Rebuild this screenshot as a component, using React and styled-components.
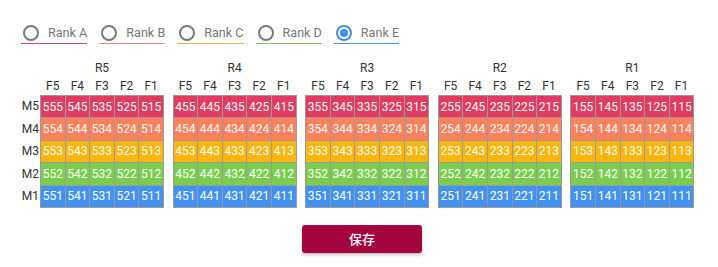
import React, { useState } from 'react'
import styled, { createGlobalStyle } from 'styled-components'

const GlobalStyle = createGlobalStyle`
  html, body {
    margin: 0;
    padding: 0;
    background: #fff;
  }
  * {
    box-sizing: border-box;
    font-family: Roboto, "Noto Sans CJK SC", sans-serif;
  }
`;

const RANKS = [
  { key: 'A', color: '#d6446b' },
  { key: 'B', color: '#f2846f' },
  { key: 'C', color: '#f3b331' },
  { key: 'D', color: '#7dc35e' },
  { key: 'E', color: '#4a8ee6' },
];

const ROW_COLORS = {
  5: '#e43a60',
  4: '#fe805c',
  3: '#fbb50c',
  2: '#7bcd4e',
  1: '#4192f3',
};

const Card = styled.div`
height: 264px;
background: #fff;
box-shadow: 0 1px 0 #a3a3a3, 0 2px 2px rgba(0, 0, 0, 0.18);
padding: 22px 0 0 21px;
`;

const RadioGroup = styled.div`
display: flex;
gap: 12px;
`;

const RadioItem = styled.label`
display: inline-flex;
align-items: center;
height: 22px;
padding-left: 2px;
gap: 9px;
border-bottom: 1px solid ${p => p.$color};
cursor: pointer;
`;

const Circle = styled.span`
width: 16px;
height: 16px;
border-radius: 50%;
border: 2px solid ${p => (p.$on ? '#3f8cf2' : '#7a7a7a')};
display: flex;
align-items: center;
justify-content: center;

&::after {
  content: '';
  width: 8px;
  height: 8px;
  border-radius: 50%;
  background: ${p => (p.$on ? '#3f8cf2' : 'transparent')};
}
`;

const RadioText = styled.span`
font-size: 12.6px;
color: #777;
line-height: 16px;
`;

const Board = styled.div`
display: flex;
margin-top: 16px;
`;

const MLabels = styled.div`
width: 19px;
display: flex;
flex-direction: column;
gap: 1.2px;
padding-top: 36px;
`;

const MLabel = styled.div`
height: 21.4px;
line-height: 21.4px;
font-size: 12px;
color: #333;
text-align: right;
padding-right: 1px;
`;

const Groups = styled.div`
display: flex;
gap: 8.6px;
`;

const Group = styled.div`
display: flex;
flex-direction: column;
width: 124px;
`;

const GroupTitle = styled.div`
height: 17px;
line-height: 17px;
font-size: 12px;
color: #333;
text-align: center;
`;

const FRow = styled.div`
display: flex;
height: 18px;
padding: 0 1px;
gap: 1px;
`;

const FLabel = styled.div`
width: 23.6px;
font-size: 12px;
line-height: 18px;
color: #333;
text-align: center;
`;

const Grid = styled.div`
display: grid;
grid-template-columns: repeat(5, 23.6px);
grid-auto-rows: 21.4px;
gap: 1px;
padding: 1px;
background: #9a9a9a;
`;

const Cell = styled.div`
background: ${p => p.$bg};
color: #fff;
font-size: 12px;
display: flex;
align-items: center;
justify-content: center;
`;

const Footer = styled.div`
display: flex;
justify-content: center;
padding-left: 6px;
margin-top: 17px;
margin-left: -21px;
`;

const SaveButton = styled.button`
width: 120px;
height: 28px;
border: none;
border-radius: 3px;
background: #a5053f;
color: #fff;
font-size: 13px;
font-weight: 500;
box-shadow: 0 2px 3px rgba(0, 0, 0, 0.25);
cursor: pointer;
`;

const rs = [5, 4, 3, 2, 1];
const fs = [5, 4, 3, 2, 1];
const ms = [5, 4, 3, 2, 1];

export default function App() {
  const [rank, setRank] = useState('E');

  return (
    <>
      <GlobalStyle />
      <Card>
        <RadioGroup>
          {RANKS.map(r => (
            <RadioItem key={r.key} $color={r.color} onClick={() => setRank(r.key)}>
              <Circle $on={rank === r.key} />
              <RadioText>Rank {r.key}</RadioText>
            </RadioItem>
          ))}
        </RadioGroup>

        <Board>
          <MLabels>
            {ms.map(m => <MLabel key={m}>M{m}</MLabel>)}
          </MLabels>
          <Groups>
            {rs.map(r => (
              <Group key={r}>
                <GroupTitle>R{r}</GroupTitle>
                <FRow>
                  {fs.map(f => <FLabel key={f}>F{f}</FLabel>)}
                </FRow>
                <Grid>
                  {ms.map(m =>
                    fs.map(f => (
                      <Cell key={`${m}-${f}`} $bg={ROW_COLORS[m]}>
                        {`${r}${f}${m}`}
                      </Cell>
                    ))
                  )}
                </Grid>
              </Group>
            ))}
          </Groups>
        </Board>

        <Footer>
          <SaveButton>保存</SaveButton>
        </Footer>
      </Card>
    </>
  )
}
